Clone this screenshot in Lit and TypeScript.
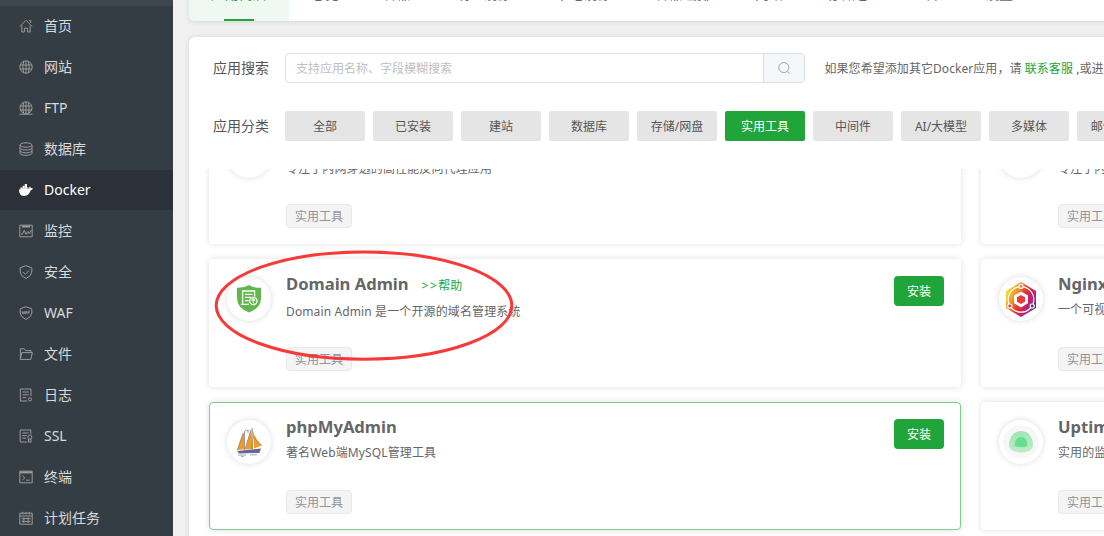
import { LitElement, html, css, svg, nothing } from "lit";
import { customElement, property } from "lit/decorators.js";

const icons: Record<string, unknown> = {
  home: svg`<path d="M1 7.4 7 1.2 13 7.4M2.8 6.6V13H5.4V9.2H8.6V13H11.2V6.6M10 1.6H11.8V4"/>`,
  globe: svg`<circle cx="7" cy="7" r="6.2"/><path d="M7 .8V13.2M1 5H13M1 9H13M4.6 1.2Q3 7 4.6 12.8M9.4 1.2Q11 7 9.4 12.8"/>`,
  ftp: svg`<circle cx="7" cy="6.8" r="6"/><path d="M7 1V12.8M1 5H13M1 9H13M4.8 1.3Q3 7 4.6 12.4M9.2 1.3Q11 7 9.4 12.4M.6 13.2H13.4"/>`,
  db: svg`<ellipse cx="7" cy="3" rx="6" ry="2.2"/><path d="M1 3V11.2C1 14 13 14 13 11.2V3M1 6.2C2.5 8.6 11.5 8.6 13 6.2M1 9C2.5 11.4 11.5 11.4 13 9"/>`,
  docker: svg`<path fill="currentColor" stroke="none" d="M0 6.6H1.4V4.4H3.6V2.8H5.8V1H8V4.4H9.6V6H10.2Q10 4.3 10.8 3.4 11.8 4.2 11.9 5.2 13 4.9 14 5.6 13.2 7.2 11.7 7.3C10.6 10.8 8.5 13 4.8 13 1.8 13 0 10.8 0 6.6Z"/><path stroke="#2c3038" stroke-width=".3" d="M3.6 4.4V6.2M5.8 3V6.2M8 4.4V6.2"/>`,
  monitor: svg`<path d="M.8 1.2H13.2V12.8H.8ZM2 10H3.6L5.2 6.2 7 10.4 8.8 7.4 10 9.8 12.4 6.2"/><path d="M3 2.5H11" stroke-width="2"/>`,
  shield: svg`<path d="M7 .7 12.8 2.8V7Q12.6 11 7 13.5 1.4 11 1.2 7V2.8ZM4 7 6.4 9.2 10.2 5.4"/>`,
  waf: svg`<path d="M7 .7 12.8 2.8V7Q12.6 11 7 13.5 1.4 11 1.2 7V2.8Z"/><path stroke-width=".8" d="M3 5 3.7 8 4.5 5.8 5.3 8 6 5M6.2 8 7.1 5 8 8M9 8V5.2H11M9 6.6H10.6"/>`,
  folder: svg`<path d="M1.4 12.2V1.8H5.2L6.6 3.6H12V5.4M1.2 12.4 2.8 5.6H13.4L11.8 12.4Z"/>`,
  log: svg`<path d="M8.2 13H1.4V1H12V8M3.6 4H9.8M3.6 6.8H9.8M3.6 9.6H7"/><circle cx="11" cy="11.3" r="1.6"/>`,
  ssl: svg`<path d="M8.2 13H1.2V1H11.8V5.4M3.4 4H9.6M3.4 6.6H7.6M3.4 9.2H7"/><circle cx="10.8" cy="8.2" r="2"/><path d="M9.6 10V13.4L10.8 12.4 12 13.4V10"/>`,
  terminal: svg`<path d="M.8 1.2H13.2V12.8H.8Z"/><path stroke-width="2" d="M1 2.4H13"/><path d="M3.4 5.6 5.8 7.8 3.4 10M7 10.2H10.6"/>`,
  plan: svg`<path d="M.8 2.2H13.2V13.2H.8ZM.8 5H13.2M3.8.8V3.4M7 .8V3.4M10.2.8V3.4M2.6 7.6H11.6M2.6 10.4H11.6M4.8 6.4V12M9.2 6.4V12"/>`,
};

const logos: Record<string, unknown> = {
  domain: svg`<path fill="#5fb94a" d="M22 8Q27 11.2 34 10.8V21Q34 31 22 35.4 10 31 10 21V10.8Q17 11.2 22 8Z"/>
    <g fill="none" stroke="#fff" stroke-width="1.3"><path d="M22 27.4H15.6V14H27.6V19.6M18 17.4H25.4M18 20.4H24M18 23.6H21.6M14 27.4H22"/><circle cx="26.4" cy="24" r="3.7"/><path stroke-width="1.1" d="M26.4 26.4V22.2M24.6 23.6 26.4 21.8 28.2 23.6"/></g>`,
  sail: svg`<path fill="#f29d22" d="M17.4 12Q12.6 20 10.8 30L17.2 29.2ZM24 9 18.4 29.4 26.2 29ZM25.6 9.6 27.2 28.6 34.4 25.4Q28 19 25.6 9.6Z"/>
    <path fill="none" stroke="#8a8684" stroke-width=".9" d="M17.4 11V30M25.2 8V29M16.2 13 10.4 30M24 10 18 29.4M26 17 35 25.6"/>
    <path fill="#65669c" d="M10 31 34 28.4 32.4 33 12 33.4Z"/><path fill="none" stroke="#a5a3ad" d="M11 35H19M23 34.8H30M14 36.4H17M18 10.4H22M19.6 12H22"/>`,
  nginx: svg`<defs><linearGradient id="g" x1="0" y1=".2" x2="1" y2=".8"><stop offset="0" stop-color="#f6ef34"/><stop offset=".28" stop-color="#f39a2c"/><stop offset=".5" stop-color="#e2382f"/><stop offset=".68" stop-color="#d01f63"/><stop offset=".82" stop-color="#a02a88"/><stop offset="1" stop-color="#502b7c"/></linearGradient></defs>
    <path fill="url(#g)" d="M22 5 37 14V31L22 40 7 31V14Z"/><circle cx="22" cy="22.4" r="12.8" fill="none" stroke="#fff" stroke-width="1.2"/>
    <path fill="#fff" d="M22 14.6 29 18.6V26.2L22 30.4 15 26.2V18.6Z"/><path fill="#ee3b35" d="M22 18 26 20.2V24.8L22 27 18 24.8V20.2Z"/>
    <g stroke="#fff" stroke-width="1.2"><circle cx="22" cy="9.4" r="2" fill="#ef7b2e"/><circle cx="10.8" cy="29" r="2" fill="#e5383d"/><circle cx="33.2" cy="29" r="2" fill="#5b2a7a"/></g>`,
  uptime: svg`<defs><linearGradient id="u" x1="0" y1="0" x2="0" y2="1"><stop offset="0" stop-color="#9fe6b5"/><stop offset="1" stop-color="#bdebc9"/></linearGradient></defs>
    <ellipse cx="22" cy="22" rx="18" ry="16.5" fill="#f7f7f7"/><path fill="url(#u)" d="M22 11C29 11 34 17 34 25 34 35 10 35 10 25 10 17 15 11 22 11Z"/>
    <path fill="#63df90" d="M22 17C25.6 17 28 20 28.4 25.4 28 27.6 16 27.6 15.6 25.4 16 20 18.4 17 22 17Z"/>`,
};

@customElement("side-nav")
class SideNav extends LitElement {
  static styles = css`
    :host { display: block; width: 173px; flex: none; background: #353d44; }
    .strip { height: 6px; background: #3d454f; }
    .item { display: flex; align-items: center; gap: 11px; height: 40px; margin-bottom: 1px; padding-left: 19px; color: #d9dadb; font-size: 14px; line-height: 20px; }
    .item.on { background: #2c3038; color: #fff; }
    svg { width: 14px; height: 14px; color: #9a9a98; fill: none; stroke: currentColor; stroke-width: 1; }
    .on svg { color: #fff; }
  `;
  items = [["home", "首页"], ["globe", "网站"], ["ftp", "FTP"], ["db", "数据库"], ["docker", "Docker"], ["monitor", "监控"], ["shield", "安全"], ["waf", "WAF"], ["folder", "文件"], ["log", "日志"], ["ssl", "SSL"], ["terminal", "终端"], ["plan", "计划任务"]];
  render() {
    return html`<div class="strip"></div>
      ${this.items.map(([icon, name]) => html`<div class="item ${icon === "docker" ? "on" : ""}"><svg viewBox="0 0 14 14">${icons[icon]}</svg><span>${name}</span></div>`)}`;
  }
}

@customElement("app-card")
class AppCard extends LitElement {
  @property() logo = "";
  @property() name = "";
  @property() desc = "";
  @property({ type: Boolean }) help = false;
  static styles = css`
    :host { box-sizing: border-box; display: flex; height: 128px; padding: 16px 16px 0 17px; border: 1px solid transparent; border-radius: 4px; background: #fff; box-shadow: 0 0 6px rgba(0, 0, 0, 0.13); }
    :host([active]) { border-color: #7fce91; }
    .logo { width: 44px; height: 44px; margin: 1px 15px 0 0; flex: none; border-radius: 50%; background: #fff; box-shadow: 0 0 6px rgba(0, 0, 0, 0.14); }
    .logo svg { display: block; width: 44px; height: 44px; }
    .body { flex: 1; display: flex; flex-direction: column; align-items: flex-start; height: 95px; white-space: nowrap; }
    .title { display: flex; align-items: center; gap: 13px; height: 14px; font-size: 16.6px; font-weight: 700; color: #666; }
    .help { color: #20a53a; font-size: 12px; font-weight: 400; padding-top: 4px; }
    .gt { letter-spacing: 1.5px; }
    .desc { margin-top: 10px; font-size: 12px; line-height: 20px; letter-spacing: 0.12px; color: #666; }
    .desc.low { margin-top: 12px; }
    .tag { box-sizing: border-box; margin-top: auto; height: 24px; padding: 0 8px; border: 1px solid #e9e9eb; border-radius: 4px; background: #f4f4f5; color: #909399; font-size: 12px; line-height: 24px; }
    .install { width: 50px; height: 30px; flex: none; border-radius: 4px; background: #20a53a; color: #fff; font-size: 12px; line-height: 32px; text-align: center; }
  `;
  render() {
    return html`<div class="logo"><svg viewBox="0 0 44 44">${logos[this.logo] ?? nothing}</svg></div>
      <div class="body">
        <div class="title"><span>${this.name}</span>${this.help ? html`<span class="help"><span class="gt">&gt;&gt;</span>帮助</span>` : nothing}</div>
        <div class="desc ${this.help ? "low" : ""}">${this.desc}</div>
        <div class="tag">实用工具</div>
      </div>
      <div class="install">安装</div>`;
  }
}

@customElement("app-root")
class AppRoot extends LitElement {
  static styles = css`
    :host { display: flex; width: 1104px; height: 536px; overflow: hidden; position: relative; background: #f0f0f0; font-family: "Noto Sans", "Noto Sans CJK SC", sans-serif; }
    .main { flex: 1; min-width: 0; padding-left: 16px; }
    .tabs { display: flex; width: 1000px; height: 52px; margin-top: -31px; border-radius: 0 0 6px 6px; background: #fff; box-shadow: 0 1px 5px rgba(0, 0, 0, 0.1); overflow: hidden; }
    .tab { display: flex; flex-direction: column; align-items: center; justify-content: space-between; padding: 15px 22px 0; font-size: 14px; line-height: 20px; color: #666; }
    .tab.on { background: #eff9f1; color: #20a53a; }
    .tab.on::after { content: ""; width: 30px; height: 2px; background: #20a53a; }
    .panel { box-sizing: border-box; width: 1000px; height: 520px; margin-top: 16px; padding-top: 16px; border-radius: 6px; background: #fff; box-shadow: 0 0 5px rgba(0, 0, 0, 0.1); }
    .row { display: flex; align-items: center; height: 30px; padding-left: 24px; white-space: nowrap; }
    .label { width: 72px; padding-bottom: 2px; font-size: 14px; color: #555; }
    .search { box-sizing: border-box; display: flex; width: 520px; height: 30px; border: 1px solid #dcdfe6; border-radius: 4px; overflow: hidden; }
    .hint { flex: 1; padding-left: 10px; color: #bfc0c4; font-size: 12px; line-height: 30px; }
    .go { display: flex; align-items: center; justify-content: center; width: 40px; border-left: 1px solid #dcdfe6; background: #f5f7fa; }
    .go svg { width: 12px; height: 12px; fill: none; stroke: #a0a4ab; }
    .tip { margin-left: 19.5px; font-size: 12px; color: #666; letter-spacing: 0.06px; }
    .link { color: #20a53a; }
    .cats { margin-top: 28px; }
    .cat { width: 80px; height: 30px; margin-right: 8px; flex: none; border-radius: 2px; background: #e5e5e5; color: #555; font-size: 12px; line-height: 32px; text-align: center; }
    .cat.on { background: #20a53a; color: #fff; }
    .scroll { display: flex; flex-direction: column; justify-content: flex-end; height: 361px; margin: 28px 0 0 16px; padding: 0 4px 6px; overflow: hidden; }
    .grid { display: grid; grid-template-columns: 752px 752px; gap: 15px 20px; }
    .mark { position: absolute; left: 210px; top: 246px; width: 308px; height: 120px; fill: none; stroke: #f93838; stroke-width: 3; }
  `;
  tabs = ["应用商店", "总览", "容器", "线上镜像", "本地镜像", "容器编排", "网络", "存储卷", "仓库", "设置"];
  cats = ["全部", "已安装", "建站", "数据库", "存储/网盘", "实用工具", "中间件", "AI/大模型", "多媒体", "邮件/办公"];
  render() {
    return html`<side-nav></side-nav>
      <div class="main">
        <div class="tabs">${this.tabs.map((t, i) => html`<div class="tab ${i ? "" : "on"}"><span>${t}</span></div>`)}</div>
        <div class="panel">
          <div class="row"><span class="label">应用搜索</span>
            <div class="search"><div class="hint">支持应用名称、字段模糊搜索</div><div class="go"><svg viewBox="0 0 12 12"><circle cx="5.8" cy="5.6" r="5"/><path d="M9.2 9.4 11.4 11.6"/></svg></div></div>
            <span class="tip">如果您希望添加其它Docker应用，请 <span class="link">联系客服</span> ,或进群</span>
          </div>
          <div class="row cats"><span class="label">应用分类</span>${this.cats.map((c) => html`<div class="cat ${c === "实用工具" ? "on" : ""}">${c}</div>`)}</div>
          <div class="scroll"><div class="grid">
            <app-card name="frps" desc="专注于内网穿透的高性能反向代理应用" help></app-card>
            <app-card name="frpc" desc="专注于内网穿透的高性能反向代理应用" help></app-card>
            <app-card logo="domain" name="Domain Admin" desc="Domain Admin 是一个开源的域名管理系统" help></app-card>
            <app-card logo="nginx" name="Nginx Proxy Manager" desc="一个可视化的反向代理管理工具"></app-card>
            <app-card logo="sail" name="phpMyAdmin" desc="著名Web端MySQL管理工具" active></app-card>
            <app-card logo="uptime" name="Uptime Kuma" desc="实用的监控工具"></app-card>
          </div></div>
        </div>
      </div>
      <svg class="mark" viewBox="0 0 308 120"><ellipse cx="154" cy="59.6" rx="147.8" ry="53.6"/></svg>`;
  }
}
